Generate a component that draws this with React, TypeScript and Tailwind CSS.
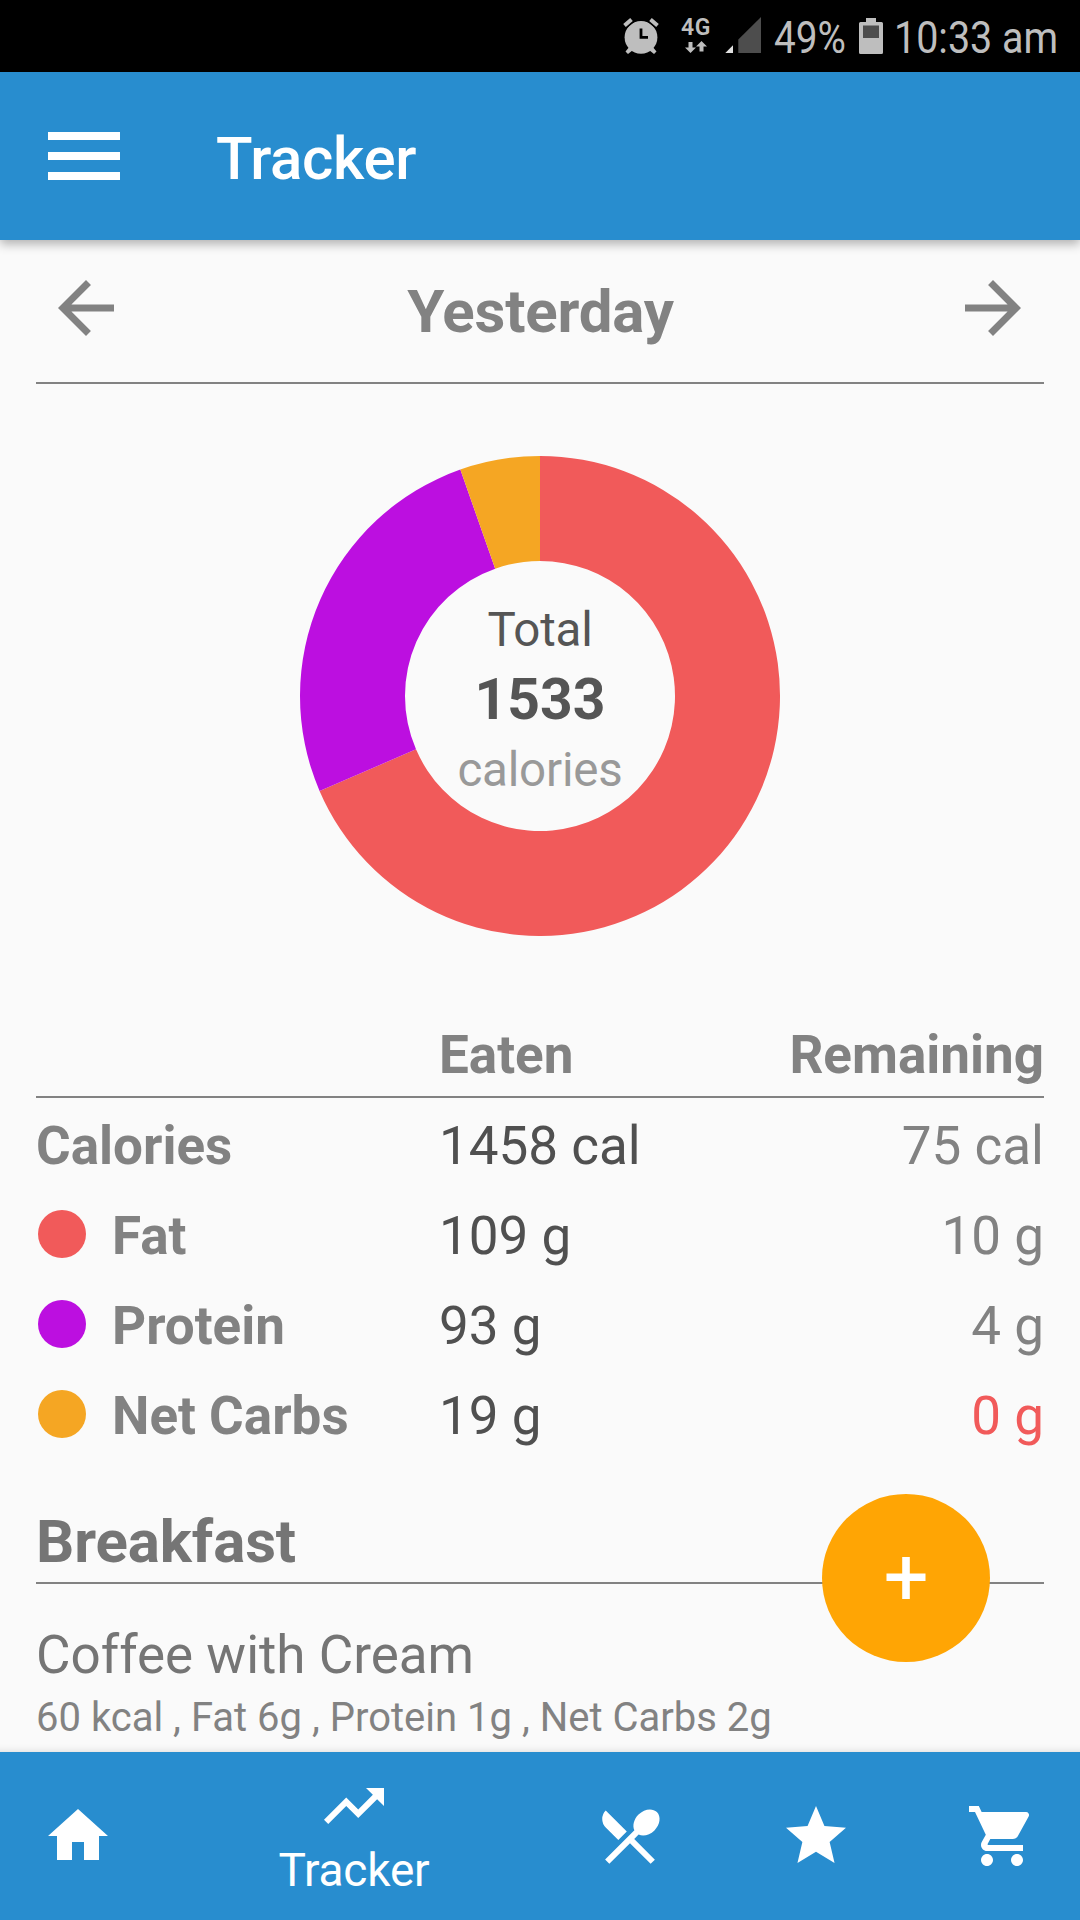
import React from 'react';
import {
  MdArrowBack,
  MdArrowForward,
  MdHome,
  MdLocalDining,
  MdMenu,
  MdShoppingCart,
  MdStar,
  MdTrendingUp,
} from 'react-icons/md';

const macros = [
  { name: 'Fat', color: '#f15a5a', kcal: 980, eaten: '109 g', remaining: '10 g', over: false },
  { name: 'Protein', color: '#bc0fe0', kcal: 373, eaten: '93 g', remaining: '4 g', over: false },
  { name: 'Net Carbs', color: '#f5a623', kcal: 77, eaten: '19 g', remaining: '0 g', over: true },
];

const point = (radius: number, fraction: number) => {
  const angle = fraction * 2 * Math.PI;
  return `${240 + radius * Math.sin(angle)} ${240 - radius * Math.cos(angle)}`;
};

const slicePath = (from: number, to: number) => {
  const large = to - from > 0.5 ? 1 : 0;
  return `M${point(240, from)} A240 240 0 ${large} 1 ${point(240, to)} L${point(135, to)} A135 135 0 ${large} 0 ${point(135, from)} Z`;
};

const StatusBar: React.FC = () => (
  <div className="flex h-[72px] shrink-0 items-start bg-black pl-[623px] text-[#bebebe]">
    <svg className="mt-[18px] h-9 w-9" viewBox="0 0 36 36" fill="currentColor">
      <path d="M7 28L2.5 33.5L5 36L10 32zM29 28L33.5 33.5L31 36L26 32z" />
      <circle cx="18" cy="19.3" r="16.4" />
      <path d="M1.5 7.5L8.5 1.5M34.5 7.5L27.5 1.5" stroke="#000" strokeWidth="7" />
      <path d="M1.5 7.5L8.5 1.5M34.5 7.5L27.5 1.5" stroke="currentColor" strokeWidth="4" />
      <path d="M18 10.5v8.8h7" fill="none" stroke="#000" strokeWidth="2.8" />
    </svg>
    <div className="ml-[22px] mt-4 flex w-[30px] flex-col items-center">
      <span className="text-[23px] font-semibold leading-6 tracking-[0.5px]">4G</span>
      <svg className="mt-[1px] h-3 w-[22px]" viewBox="0 0 22 12" fill="currentColor">
        <path d="M3.5 1h4v5.5H11L5.5 12L0 6.5h3.5zM14.5 10.5v-5H11L16.5 0l5.5 5.5h-3.5v5z" />
      </svg>
    </div>
    <svg className="ml-[13px] mt-[17px] h-9 w-[37px]" viewBox="0 0 37 36">
      <path d="M1.3 36L9 28.3V36z" fill="#e0e0e0" />
      <path d="M14.3 36V22.5L37 0v36z" fill="#4d4d4d" />
    </svg>
    <span className="ml-[13px] mt-3 w-[85px] origin-left scale-x-[0.88] whitespace-nowrap text-[44px] leading-[52px]">49%</span>
    <svg className="mt-[18px] h-9 w-6" viewBox="0 0 24 36">
      <path d="M7 0h10v4h5.5q1.5 0 1.5 1.5v29q0 1.5-1.5 1.5h-21Q0 36 0 34.5v-29Q0 4 1.5 4H7z" fill="#bebebe" />
      <path d="M4 7.5h16V20H4z" fill="#4d4d4d" />
    </svg>
    <span className="ml-[11px] mt-3 origin-left scale-x-[0.897] whitespace-nowrap text-[44px] leading-[52px]">10:33 am</span>
  </div>
);

const MacroChart: React.FC = () => {
  const total = macros.reduce((sum, m) => sum + m.kcal, 0);
  let start = 0;

  return (
    <div className="relative mx-auto mt-[72px] h-[480px] w-[480px]">
      <svg className="h-full w-full" viewBox="0 0 480 480">
        {macros.map((m) => {
          const from = start;
          start += m.kcal / total;
          return <path key={m.name} d={slicePath(from, start)} fill={m.color} />;
        })}
      </svg>
      <div className="absolute inset-0 flex flex-col items-center justify-center pt-[7px]">
        <span className="text-[47.5px] leading-[70px] tracking-[-0.2px] text-[#555]">Total</span>
        <span className="text-[57px] font-bold leading-[70px] text-[#555]">1533</span>
        <span className="text-[47.5px] leading-[70px] tracking-[-0.2px] text-[#999]">calories</span>
      </div>
    </div>
  );
};

const NutritionTable: React.FC = () => (
  <section className="mt-[83px] text-[53px]">
    <div className="grid grid-cols-[403px_1fr_auto] border-b-2 border-[#828282] pb-[5px] font-bold leading-[72px] text-[#828282]">
      <span />
      <span>Eaten</span>
      <span>Remaining</span>
    </div>
    <div className="pt-[3px] leading-[90px] text-[#828282]">
      <div className="grid h-[90px] grid-cols-[403px_1fr_auto]">
        <span className="font-bold">Calories</span>
        <span className="text-[#505050]">1458 cal</span>
        <span>75 cal</span>
      </div>
      {macros.map((m) => (
        <div key={m.name} className="grid h-[90px] grid-cols-[403px_1fr_auto]">
          <div className="flex items-center">
            <span className="mb-1 ml-[2px] mr-[26px] h-12 w-12 rounded-full" style={{ backgroundColor: m.color }} />
            <span className="font-bold">{m.name}</span>
          </div>
          <span className="text-[#505050]">{m.eaten}</span>
          <span className={m.over ? 'text-[#f15a5a]' : ''}>{m.remaining}</span>
        </div>
      ))}
    </div>
  </section>
);

export default function App() {
  return (
    <div className="relative flex h-[1920px] w-[1080px] flex-col overflow-hidden bg-[#fafafa] font-['Roboto',sans-serif]">
      <StatusBar />

      <header className="z-10 flex h-[168px] shrink-0 items-center bg-[#288dcf] pl-9 text-white shadow-[0_4px_10px_rgba(0,0,0,0.3)]">
        <MdMenu className="h-24 w-24" />
        <h1 className="ml-[84px] pt-[6px] text-6xl font-medium leading-[72px] tracking-[-0.3px]">Tracker</h1>
      </header>

      <main className="flex-1 overflow-hidden px-9">
        <div className="flex h-36 items-center justify-between border-b-2 border-[#828282] pl-2 pr-[9px] pb-[6px] text-[#828282]">
          <MdArrowBack className="h-[84px] w-[84px]" />
          <h2 className="pl-[2px] pt-[7px] text-6xl font-bold leading-[72px] tracking-[-0.2px]">Yesterday</h2>
          <MdArrowForward className="h-[84px] w-[84px]" />
        </div>

        <MacroChart />
        <NutritionTable />

        <section className="mt-[45px]">
          <h3 className="border-b-2 border-[#828282] pb-[4px] text-6xl font-bold leading-[72px] tracking-[-0.1px] text-[#757575]">Breakfast</h3>
          <p className="mt-[39px] text-[53px] leading-[64px] text-[#757575]">Coffee with Cream</p>
          <p className="mt-[5px] text-[40px] leading-[52px] text-[#828282]">60 kcal , Fat 6g , Protein 1g , Net Carbs 2g</p>
        </section>
      </main>

      <button className="absolute bottom-[258px] right-[90px] flex h-[168px] w-[168px] items-center justify-center rounded-full bg-[#ffa504]">
        <svg className="h-[42px] w-[40px]" viewBox="0 0 40 42" fill="#fff">
          <path d="M16.2 0h7.6v16.5H39.5v7.5H23.8v18h-7.6V24H.5v-7.5h15.7z" />
        </svg>
      </button>

      <nav className="z-10 -mx-[15px] grid h-[168px] shrink-0 grid-cols-[186px_366px_186px_186px_186px] items-center justify-items-center bg-[#288dcf] text-white shadow-[0_0_8px_rgba(0,0,0,0.15)]">
        <MdHome className="h-[72px] w-[72px]" />
        <div className="flex h-full flex-col items-center pt-[18px]">
          <MdTrendingUp className="h-[72px] w-[72px]" />
          <span className="text-[46px] leading-[56px] tracking-[-0.2px]">Tracker</span>
        </div>
        <MdLocalDining className="h-[72px] w-[72px]" />
        <MdStar className="h-[72px] w-[72px]" />
        <MdShoppingCart className="h-[72px] w-[72px]" />
      </nav>
    </div>
  );
}
